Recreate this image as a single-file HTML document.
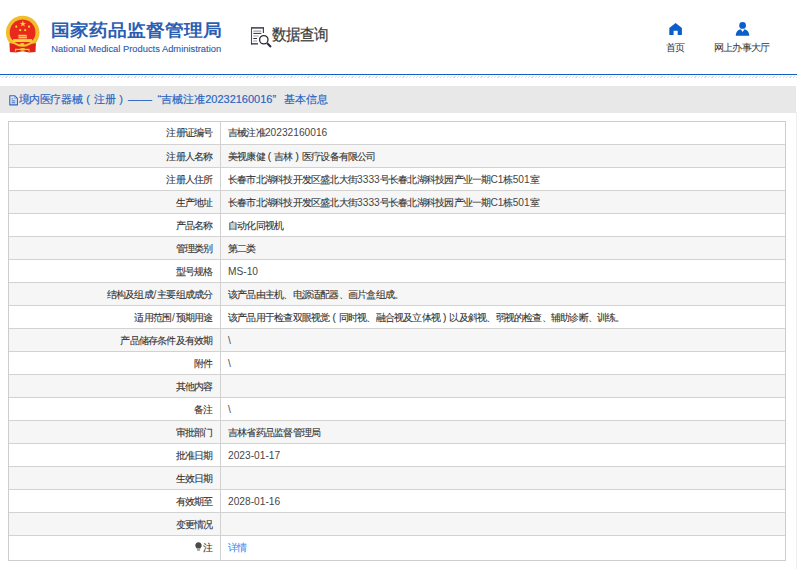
<!DOCTYPE html>
<html><head><meta charset="utf-8">
<style>
*{margin:0;padding:0;box-sizing:border-box}
html,body{width:797px;height:569px;overflow:hidden;background:#fff;font-family:"Liberation Sans",sans-serif;color:#333}
.abs{position:absolute;white-space:nowrap}
#title{left:51px;top:18.9px;font-size:19px;font-weight:bold;color:#2b5eb3;line-height:22px;transform:scaleY(0.91);transform-origin:0 19px}
#en{left:51.3px;top:42.5px;font-size:9.35px;color:#2a5db0;-webkit-text-stroke:0.12px #2a5db0;line-height:12px}
#dq{left:272.2px;top:26.3px;font-size:14.5px;letter-spacing:-1.1px;color:#3a3a3a;-webkit-text-stroke:0.2px #3a3a3a;line-height:18px;transform:scaleY(1.1);transform-origin:0 15px}
.nav{color:#333;line-height:11px;font-size:10px}
#bline{left:0;top:74px;width:797px;height:1px;background:#0f5fc6}
#hatch{left:0;top:76px;width:797px;height:2px;background:repeating-linear-gradient(135deg,#dcdcdc 0,#dcdcdc 0.9px,#fff 0.9px,#fff 2.4px)}
#bar{left:0;top:86px;width:796px;height:26.5px;background:#e8e8e8}
.bt{top:93px;font-size:11px;color:#2862c0;line-height:13px;-webkit-text-stroke:0.15px #2862c0}
#rline{left:796px;top:112px;width:1px;height:457px;background:#eee}
#tbl{left:8px;top:121px;width:778px;height:440px;border:1px solid #cdcdcd}
.row{position:absolute;left:0;width:776px;border-top:1px solid #d2d2d2}
.row.g{background:#f6f6f6}
.lab{position:absolute;right:572.5px;white-space:nowrap;line-height:11px;font-size:10px;color:#333;-webkit-text-stroke:0.1px #333}
.val{position:absolute;left:219px;white-space:nowrap;line-height:11px;font-size:10px;color:#333;-webkit-text-stroke:0.1px #333}
#vdiv{left:211px;top:0;width:1px;height:438px;background:#d2d2d2}
</style></head><body>
<svg class="abs" style="left:0;top:0" width="48" height="58" viewBox="0 0 48 58">
  <circle cx="22.7" cy="32.6" r="16.8" fill="#f2bd2c"/>
  <circle cx="22.6" cy="32.4" r="12.9" fill="#e8291c"/>
  <path d="M9.4 43 L9.9 52 L16 52.6 L22.6 51.2 L29.2 52.6 L35.5 52 L35.9 43 Q22.6 47 9.4 43 Z" fill="#e0241a"/>
  <path d="M9.6 38.6 Q22.6 53.2 35.6 38.6" fill="none" stroke="#f4c430" stroke-width="1.8"/>
  <polygon points="22.9,20.6 23.7,22.9 26.1,22.9 24.2,24.3 24.9,26.6 22.9,25.2 20.9,26.6 21.6,24.3 19.7,22.9 22.1,22.9" fill="#f7d53a"/>
  <circle cx="16.3" cy="26.7" r="1.1" fill="#f7d53a"/>
  <circle cx="29.1" cy="26.7" r="1.1" fill="#f7d53a"/>
  <circle cx="20.2" cy="30.2" r="1.1" fill="#f7d53a"/>
  <circle cx="25.2" cy="30.2" r="1.1" fill="#f7d53a"/>
  <path d="M17.5 36.2 L19 34.8 H26 L27.7 36.2 Z" fill="#f7d53a"/>
  <rect x="18.5" y="36.6" width="8.4" height="1.8" fill="#f5cf45"/>
  <rect x="13.1" y="39.1" width="19" height="2.9" fill="#f7d53a"/>
  <ellipse cx="22.3" cy="44.4" rx="2.3" ry="1.4" fill="#f5cc38"/>
  <path d="M15 49.4 H29.5" stroke="#f5cc38" stroke-width="1.2"/>
  <ellipse cx="22.6" cy="49.4" rx="2.6" ry="1.4" fill="#f5cc38"/>
  <path d="M16 49.6 L15.2 51.6 M28.5 49.6 L29.3 51.6" stroke="#f5cc38" stroke-width="1"/>
</svg>
<div id="title" class="abs">国家药品监督管理局</div>
<div id="en" class="abs">National Medical Products Administration</div>
<svg class="abs" style="left:249px;top:26px" width="24" height="23" viewBox="0 0 24 23">
  <path d="M2 1.9 H14.9" stroke="#2e2e3e" stroke-width="1.4"/>
  <path d="M2.5 1.5 V18.5" stroke="#4a4a58" stroke-width="1.1"/>
  <path d="M14.4 1.5 V7" stroke="#3a3a48" stroke-width="1.1"/>
  <path d="M2 17.85 H9" stroke="#2e2e3e" stroke-width="1.3"/>
  <path d="M4.3 5.1 H12.3 M4.3 10 H9.6 M4.3 15 H8" stroke="#a0a0a8" stroke-width="1.2"/>
  <path d="M4.3 7.4 H12.3 M4.3 12.5 H8" stroke="#2e2e3e" stroke-width="1"/>
  <circle cx="14.8" cy="13.75" r="4.2" fill="#fff" stroke="#2a2a3a" stroke-width="1.3"/>
  <path d="M18.2 17.2 L22 21" stroke="#2a2a3a" stroke-width="2"/>
</svg>
<div id="dq" class="abs">数据查询</div>
<svg class="abs" style="left:668px;top:22px" width="16" height="14" viewBox="0 0 16 14">
  <path d="M1.3 5.9 L7.6 1 L13.9 5.9 V12.9 H9.7 V8.8 H5.6 V12.9 H1.3 Z" fill="#0b5fc9"/>
</svg>
<div class="abs nav" style="left:666px;top:42px"><span style="font-size:10px;letter-spacing:-0.78px">首页</span></div>
<svg class="abs" style="left:735px;top:21px" width="16" height="16" viewBox="0 0 16 16">
  <circle cx="7.6" cy="4.4" r="3.35" fill="#0b5fc9"/>
  <path d="M0.8 14.8 C0.8 11 3 8.8 5.7 8.2 L7.6 10.9 L9.5 8.2 C12.2 8.8 14.3 11 14.3 14.8 Z" fill="#0b5fc9"/>
</svg>
<div class="abs nav" style="left:714px;top:42px"><span style="font-size:10px;letter-spacing:-0.78px">网上办事大厅</span></div>
<div id="bline" class="abs"></div>
<div id="hatch" class="abs"></div>
<div id="bar" class="abs"></div>
<svg class="abs" style="left:9px;top:94.5px" width="10" height="11" viewBox="0 0 10 11">
  <path d="M0.8 0.8 H5.9 L8.4 3.3 V9.9 H0.8 Z" fill="none" stroke="#2d66c6" stroke-width="1.1" stroke-linejoin="round"/>
  <path d="M5.6 1 V3.6 H8.2" fill="none" stroke="#7fa6e0" stroke-width="0.9"/>
  <path d="M2.6 3.9 H4.2 M2.6 5.9 H6.3 M2.6 7.8 H6.3" stroke="#2d66c6" stroke-width="0.9"/>
</svg>
<div class="abs bt" style="left:18.5px;letter-spacing:-0.35px">境内医疗器械</div>
<div class="abs bt" style="left:82.5px"><b style="display:inline-block;width:11px;text-align:center;font-weight:normal">(</b>注册<b style="display:inline-block;width:11px;text-align:center;font-weight:normal">)</b></div>
<div class="abs bt" style="left:128px;transform:scaleX(1.08);transform-origin:0 0">——</div>
<div class="abs bt" style="left:157.5px">“吉械注准20232160016”</div>
<div class="abs bt" style="left:284px">基本信息</div>
<div id="rline" class="abs"></div>

<div id="tbl" class="abs">
<div class="row" style="top:-1.20px;height:23.03px;border-top:none;"><span class="lab" style="top:6px"><span style="font-size:10px;letter-spacing:-0.78px">注册证编号</span></span><span class="val" style="top:6px"><span style="font-size:10px;letter-spacing:-0.78px">吉械注准</span><span style="font-size:10.2px;letter-spacing:0px;-webkit-text-stroke:0;color:#464646">20232160016</span></span></div>
<div class="row g" style="top:21.83px;height:23.03px;"><span class="lab" style="top:6px"><span style="font-size:10px;letter-spacing:-0.78px">注册人名称</span></span><span class="val" style="top:6px"><span style="font-size:10px;letter-spacing:-0.78px">美视康健<b style="display:inline-block;width:9.3px;text-align:center;font-weight:normal;letter-spacing:0">(</b>吉林<b style="display:inline-block;width:9.3px;text-align:center;font-weight:normal;letter-spacing:0">)</b>医疗设备有限公司</span></span></div>
<div class="row" style="top:44.86px;height:23.03px;"><span class="lab" style="top:6px"><span style="font-size:10px;letter-spacing:-0.78px">注册人住所</span></span><span class="val" style="top:6px"><span style="font-size:10px;letter-spacing:-0.78px">长春市北湖科技开发区盛北大街</span><span style="font-size:10.2px;letter-spacing:0px;-webkit-text-stroke:0;color:#464646">3333</span><span style="font-size:10px;letter-spacing:-0.78px">号长春北湖科技园产业一期</span><span style="font-size:10.2px;letter-spacing:0px;-webkit-text-stroke:0;color:#464646">C1</span><span style="font-size:10px;letter-spacing:-0.78px">栋</span><span style="font-size:10.2px;letter-spacing:0px;-webkit-text-stroke:0;color:#464646">501</span><span style="font-size:10px;letter-spacing:-0.78px">室</span></span></div>
<div class="row g" style="top:67.89px;height:23.03px;"><span class="lab" style="top:6px"><span style="font-size:10px;letter-spacing:-0.78px">生产地址</span></span><span class="val" style="top:6px"><span style="font-size:10px;letter-spacing:-0.78px">长春市北湖科技开发区盛北大街</span><span style="font-size:10.2px;letter-spacing:0px;-webkit-text-stroke:0;color:#464646">3333</span><span style="font-size:10px;letter-spacing:-0.78px">号长春北湖科技园产业一期</span><span style="font-size:10.2px;letter-spacing:0px;-webkit-text-stroke:0;color:#464646">C1</span><span style="font-size:10px;letter-spacing:-0.78px">栋</span><span style="font-size:10.2px;letter-spacing:0px;-webkit-text-stroke:0;color:#464646">501</span><span style="font-size:10px;letter-spacing:-0.78px">室</span></span></div>
<div class="row" style="top:90.92px;height:23.03px;"><span class="lab" style="top:6px"><span style="font-size:10px;letter-spacing:-0.78px">产品名称</span></span><span class="val" style="top:6px"><span style="font-size:10px;letter-spacing:-0.78px">自动化同视机</span></span></div>
<div class="row g" style="top:113.95px;height:23.03px;"><span class="lab" style="top:6px"><span style="font-size:10px;letter-spacing:-0.78px">管理类别</span></span><span class="val" style="top:6px"><span style="font-size:10px;letter-spacing:-0.78px">第二类</span></span></div>
<div class="row" style="top:136.98px;height:23.03px;"><span class="lab" style="top:6px"><span style="font-size:10px;letter-spacing:-0.78px">型号规格</span></span><span class="val" style="top:6px"><span style="font-size:10.2px;letter-spacing:0px;-webkit-text-stroke:0;color:#464646">MS-10</span></span></div>
<div class="row g" style="top:160.01px;height:23.03px;"><span class="lab" style="top:6px"><span style="font-size:10px;letter-spacing:-0.78px">结构及组成</span><span style="font-size:10.2px;margin:0 0.8px 0 0.6px;-webkit-text-stroke:0;color:#464646">/</span><span style="font-size:10px;letter-spacing:-0.78px">主要组成成分</span></span><span class="val" style="top:6px"><span style="font-size:10px;letter-spacing:-0.78px">该产品由主机、电源适配器、画片盒组成。</span></span></div>
<div class="row" style="top:183.04px;height:23.03px;"><span class="lab" style="top:6px"><span style="font-size:10px;letter-spacing:-0.78px">适用范围</span><span style="font-size:10.2px;margin:0 0.8px 0 0.6px;-webkit-text-stroke:0;color:#464646">/</span><span style="font-size:10px;letter-spacing:-0.78px">预期用途</span></span><span class="val" style="top:6px"><span style="font-size:10px;letter-spacing:-0.78px">该产品用于检查双眼视觉<b style="display:inline-block;width:9.3px;text-align:center;font-weight:normal;letter-spacing:0">(</b>同时视、融合视及立体视<b style="display:inline-block;width:9.3px;text-align:center;font-weight:normal;letter-spacing:0">)</b>以及斜视、弱视的检查、辅助诊断、训练。</span></span></div>
<div class="row g" style="top:206.07px;height:23.03px;"><span class="lab" style="top:6px"><span style="font-size:10px;letter-spacing:-0.78px">产品储存条件及有效期</span></span><span class="val" style="top:6px"><span style="font-size:10.2px;letter-spacing:0px;-webkit-text-stroke:0;color:#464646">\</span></span></div>
<div class="row" style="top:229.10px;height:23.03px;"><span class="lab" style="top:6px"><span style="font-size:10px;letter-spacing:-0.78px">附件</span></span><span class="val" style="top:6px"><span style="font-size:10.2px;letter-spacing:0px;-webkit-text-stroke:0;color:#464646">\</span></span></div>
<div class="row g" style="top:252.13px;height:23.03px;"><span class="lab" style="top:6px"><span style="font-size:10px;letter-spacing:-0.78px">其他内容</span></span><span class="val" style="top:6px"></span></div>
<div class="row" style="top:275.16px;height:23.03px;"><span class="lab" style="top:6px"><span style="font-size:10px;letter-spacing:-0.78px">备注</span></span><span class="val" style="top:6px"><span style="font-size:10.2px;letter-spacing:0px;-webkit-text-stroke:0;color:#464646">\</span></span></div>
<div class="row g" style="top:298.19px;height:23.03px;"><span class="lab" style="top:6px"><span style="font-size:10px;letter-spacing:-0.78px">审批部门</span></span><span class="val" style="top:6px"><span style="font-size:10px;letter-spacing:-0.78px">吉林省药品监督管理局</span></span></div>
<div class="row" style="top:321.22px;height:23.03px;"><span class="lab" style="top:6px"><span style="font-size:10px;letter-spacing:-0.78px">批准日期</span></span><span class="val" style="top:6px"><span style="font-size:10.2px;letter-spacing:0px;-webkit-text-stroke:0;color:#464646">2023-01-17</span></span></div>
<div class="row g" style="top:344.25px;height:23.03px;"><span class="lab" style="top:6px"><span style="font-size:10px;letter-spacing:-0.78px">生效日期</span></span><span class="val" style="top:6px"></span></div>
<div class="row" style="top:367.28px;height:23.03px;"><span class="lab" style="top:6px"><span style="font-size:10px;letter-spacing:-0.78px">有效期至</span></span><span class="val" style="top:6px"><span style="font-size:10.2px;letter-spacing:0px;-webkit-text-stroke:0;color:#464646">2028-01-16</span></span></div>
<div class="row g" style="top:390.31px;height:23.03px;"><span class="lab" style="top:6px"><span style="font-size:10px;letter-spacing:-0.78px">变更情况</span></span><span class="val" style="top:6px"></span></div>
<div class="row" style="top:413.34px;height:24.66px;"><span class="lab" style="top:6px"><svg width="7" height="9" viewBox="0 0 7 9" style="vertical-align:0px;margin-right:0.8px"><path d="M3.5 0.3 C1.5 0.3 0.3 1.9 0.3 3.5 C0.3 4.9 1.4 5.7 1.8 6.6 H5.2 C5.6 5.7 6.7 4.9 6.7 3.5 C6.7 1.9 5.5 0.3 3.5 0.3Z" fill="#4a4a4a"/><path d="M2 7.1 H5 V8.7 H2Z" fill="#9a9a9a"/></svg><span style="font-size:10px;letter-spacing:-0.78px">注</span></span><span class="val" style="top:6px"><span style="color:#4290ee;-webkit-text-stroke:0.1px #4290ee"><span style="font-size:10px;letter-spacing:-0.78px">详情</span></span></span></div>
<div id="vdiv" class="abs"></div>
</div>
</body></html>
